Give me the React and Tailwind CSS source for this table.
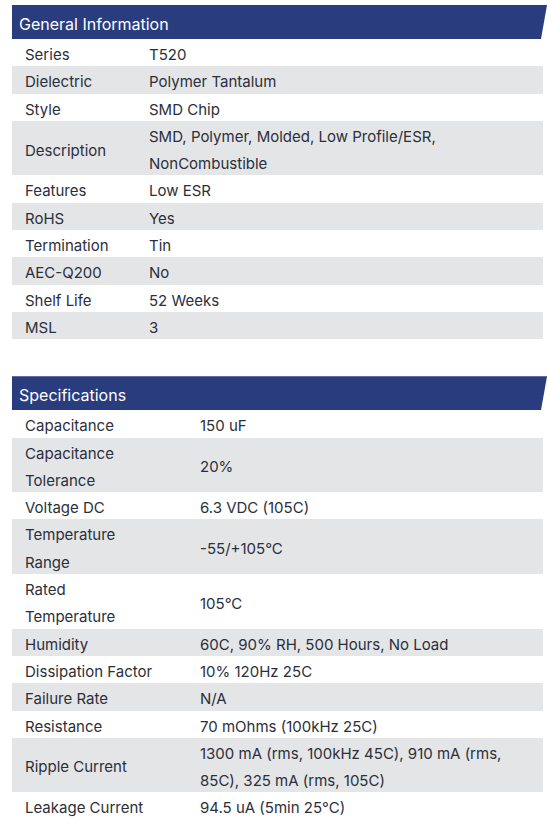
export default function App() {
  const general = [
    ["Series", "T520"],
    ["Dielectric", "Polymer Tantalum"],
    ["Style", "SMD Chip"],
    ["Description", ["SMD, Polymer, Molded, Low Profile/ESR,", "NonCombustible"]],
    ["Features", "Low ESR"],
    ["RoHS", "Yes"],
    ["Termination", "Tin"],
    ["AEC-Q200", "No"],
    ["Shelf Life", "52 Weeks"],
    ["MSL", "3"],
  ];
  const specs = [
    ["Capacitance", "150 uF"],
    [["Capacitance", "Tolerance"], "20%"],
    ["Voltage DC", "6.3 VDC (105C)"],
    [["Temperature", "Range"], "-55/+105°C"],
    [["Rated", "Temperature"], "105°C"],
    ["Humidity", "60C, 90% RH, 500 Hours, No Load"],
    ["Dissipation Factor", "10% 120Hz 25C"],
    ["Failure Rate", "N/A"],
    ["Resistance", "70 mOhms (100kHz 25C)"],
    ["Ripple Current", ["1300 mA (rms, 100kHz 45C), 910 mA (rms,", "85C), 325 mA (rms, 105C)"]],
    ["Leakage Current", "94.5 uA (5min 25°C)"],
  ];
  const lines = (v) =>
    (Array.isArray(v) ? v : [v]).map((l, i) => (
      <div key={i} className="h-[27.3px] pt-[4px] leading-[23.3px] whitespace-nowrap">
        {l}
      </div>
    ));

  const Section = ({ title, rows, labelW }) => (
    <div className="flex flex-col">
      <div className="h-[34px] w-[535px] bg-[#293c7e] text-white text-[16px] flex items-center pl-[7px] pt-[4px] [clip-path:polygon(0_0,100%_0,calc(100%-6px)_100%,0_100%)]">
        {title}
      </div>
      <div className="w-[531px] flex flex-col">
        {rows.map(([k, v], i) => (
          <div
            key={i}
            className={`flex items-center ${i % 2 === 1 ? "bg-[#e4e5e7]" : "bg-white"}`}
          >
            <div className={`${labelW} shrink-0 pl-[13px]`}>{lines(k)}</div>
            <div className="flex-1">{lines(v)}</div>
          </div>
        ))}
      </div>
    </div>
  );

  return (
    <div
      className="w-[548px] h-[822px] bg-white pt-[5px] pl-3 text-[15px] text-[#2b2f3b] overflow-hidden"
      style={{ fontFamily: "Inter, 'Noto Sans', sans-serif" }}
    >
      <div className="flex flex-col gap-[37px]">
        <Section title="General Information" rows={general} labelW="w-[137px]" />
        <Section title="Specifications" rows={specs} labelW="w-[188px]" />
      </div>
    </div>
  );
}
